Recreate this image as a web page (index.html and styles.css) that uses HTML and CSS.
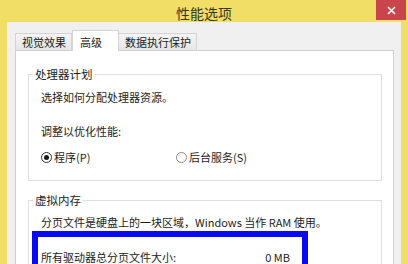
FILE: index.html
```html
<!DOCTYPE html>
<html lang="zh-CN">
  <head>
    <meta charset="UTF-8" />
    <meta name="viewport" content="width=device-width, initial-scale=1.0" />
    <title>性能选项</title>
    <link rel="stylesheet" href="styles.css">
  </head>
  <body>
    <div class="window">
      <div class="titlebar">
        <span></span>
        <span class="title">性能选项</span>
        <button class="close">
          <svg width="9" height="9" viewBox="0 0 9 9">
            <path d="M1 1L8 8M8 1L1 8" stroke="#fff" stroke-width="1.6" />
          </svg>
        </button>
      </div>

      <div class="client">
        <ul class="tabs">
          <li>视觉效果</li>
          <li class="active">高级</li>
          <li>数据执行保护</li>
        </ul>

        <div class="panel">
          <fieldset class="group">
            <legend>处理器计划</legend>
            <p class="desc">选择如何分配处理器资源。</p>
            <p class="label">调整以优化性能:</p>
            <div class="radios">
              <label class="radio checked"><i></i>程序(P)</label>
              <label class="radio"><i></i>后台服务(S)</label>
            </div>
          </fieldset>

          <fieldset class="group vm">
            <legend>虚拟内存</legend>
            <p class="desc">分页文件是硬盘上的一块区域，Windows 当作 RAM 使用。</p>
            <div class="highlight">
              <span>所有驱动器总分页文件大小:</span>
              <span>0 MB</span>
            </div>
          </fieldset>
        </div>
      </div>
    </div>
  </body>
</html>
```

FILE: styles.css
```css
html,
body {
  margin: 0;
  height: 100%;
  overflow: hidden;
}

body {
  background: #f1de66;
  font-family: "Noto Sans CJK SC", "Liberation Sans", sans-serif;
  font-size: 11px;
  color: #1c1c1c;
}

.window {
  display: flex;
  flex-direction: column;
  height: 100%;
}

.titlebar {
  display: grid;
  grid-template-columns: 1fr auto 1fr;
  align-items: start;
  height: 25px;
}

.titlebar .title {
  padding-top: 4px;
  font-size: 14px;
  line-height: 18px;
  color: #35352a;
}

.titlebar .close {
  justify-self: end;
  display: flex;
  align-items: center;
  justify-content: center;
  width: 30px;
  height: 20px;
  margin-right: 2px;
  padding: 0;
  border: none;
  background: #c8464b;
}

.client {
  flex: 1;
  display: flex;
  flex-direction: column;
  margin: 0 7px 0 7px;
  padding: 8px 7px 0 8px;
  background: #f0f0f0;
}

.tabs {
  display: flex;
  align-items: flex-end;
  margin: 0;
  padding: 0;
  list-style: none;
  position: relative;
  z-index: 1;
}

.tabs > li {
  height: 16px;
  padding: 0 5px 0 6px;
  border: 1px solid #d4d4d4;
  border-bottom: none;
  background: linear-gradient(#f4f4f4, #e6e6e6);
  line-height: 16px;
}

.tabs > li + li {
  border-left: none;
}

.tabs > li.active {
  height: 20px;
  margin-bottom: -1px;
  padding: 0 16px 0 7px;
  border-left: 1px solid #d4d4d4;
  background: #fff;
  line-height: 22px;
}

.tabs > li.active + li {
  border-left: none;
}

.panel {
  flex: 1;
  padding: 16px 11px 0 12px;
  border: 1px solid #cfcfcf;
  background: #fff;
}

.group {
  margin: 0;
  padding: 0 12px 15px 12px;
  border: 1px solid #dedede;
}

.group legend {
  margin-left: -8px;
  padding: 0 2px;
  font-size: 11.5px;
  line-height: 14px;
}

.group p {
  margin: 0;
  line-height: 16px;
}

.group .desc {
  margin-top: 8px;
}

.group .label {
  margin-top: 18px;
}

.radios {
  display: grid;
  grid-template-columns: 135px auto;
  margin-top: 10px;
}

.radio {
  display: flex;
  align-items: center;
  gap: 2px;
  line-height: 16px;
}

.radio i {
  width: 9px;
  height: 9px;
  border: 1px solid #8a8a8a;
  border-radius: 50%;
  background: #fff;
  display: flex;
  align-items: center;
  justify-content: center;
}

.radio.checked i {
  border-color: #333;
}

.radio.checked i::before {
  content: "";
  width: 5px;
  height: 5px;
  border-radius: 50%;
  background: #1a1a1a;
}

.group.vm {
  margin-top: 12px;
  padding-bottom: 40px;
}

.group.vm .desc {
  margin-top: 7px;
}

.highlight {
  display: flex;
  justify-content: space-between;
  width: 249px;
  margin: 1px 0 0 -9px;
  padding: 12px 12px 12px 3px;
  border: 6px solid #0a0af0;
  line-height: 16px;
}
```
